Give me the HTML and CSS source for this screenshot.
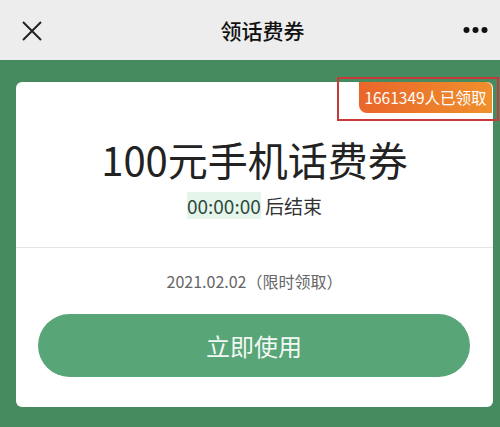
FILE: index.html
```html
<!DOCTYPE html>
<html lang="zh-CN">
<head>
    <meta charset="UTF-8">
    <meta name="viewport" content="width=device-width, initial-scale=1.0">
    <title>领话费券</title>
    <link rel="stylesheet" href="styles.css">
</head>
<body>
    <div class="navbar">
        <svg class="nav-close" width="20" height="20" viewBox="0 0 20 20">
            <path d="M1 1 L19 19 M19 1 L1 19" stroke="#222" stroke-width="2" fill="none"/>
        </svg>
        <div class="nav-title">领话费券</div>
        <svg class="nav-more" width="26" height="8" viewBox="0 0 26 8">
            <circle cx="3.5" cy="4" r="3" fill="#111"/>
            <circle cx="12.5" cy="4" r="3" fill="#111"/>
            <circle cx="21.5" cy="4" r="3" fill="#111"/>
        </svg>
    </div>

    <div class="page">
        <div class="coupon">
            <div class="badge">1661349人已领取</div>
            <div class="mark"></div>

            <div class="coupon-main">
                <div class="coupon-title">100元手机话费券</div>
                <div class="countdown"><span class="time">00:00:00</span> 后结束</div>
            </div>

            <div class="coupon-date">2021.02.02（限时领取）</div>
            <button class="use-btn">立即使用</button>
        </div>
    </div>
</body>
</html>
```

FILE: styles.css
```css
html, body {
    margin: 0;
    padding: 0;
    background: #468a5f;
}
body {
    font-family: "Noto Sans CJK SC", "Noto Sans", sans-serif;
    width: 500px;
    height: 427px;
    overflow: hidden;
}
.navbar {
    height: 60px;
    background: #ededed;
    display: flex;
    align-items: center;
    justify-content: space-between;
    padding: 0 10px 0 22px;
    box-sizing: border-box;
}
.nav-close { margin-top: 1px; }
.nav-title {
    font-size: 21px;
    font-weight: 500;
    color: #111;
    margin-left: 20px;
}
.nav-more { margin-right: 1px; }

.page {
    padding: 22px 7px 20px 16px;
}
.coupon {
    position: relative;
    background: #fff;
    border-radius: 6px;
    height: 325px;
    box-sizing: border-box;
}
.badge {
    position: absolute;
    top: 0;
    right: 1px;
    width: 133px;
    height: 31px;
    line-height: 31px;
    text-align: center;
    font-size: 15.5px;
    color: #fff;
    background: linear-gradient(90deg, #e9662a, #f0902c);
    border-radius: 0 6px 0 8px;
}
.mark {
    position: absolute;
    top: -5px;
    right: -6px;
    width: 162px;
    height: 44px;
    border: 2px solid #c8393b;
    box-sizing: border-box;
}
.coupon-main {
    height: 166px;
    padding-top: 53px;
    box-sizing: border-box;
    border-bottom: 1px solid #e4e4e4;
    text-align: center;
}
.coupon-title {
    font-size: 40px;
    line-height: 48px;
    color: #222;
}
.countdown {
    margin-top: 9px;
    font-size: 19px;
    line-height: 28px;
    color: #333;
}
.time {
    color: #2e4a3c;
    background: #e6f5ec;
}
.coupon-date {
    margin-top: 21px;
    font-size: 16px;
    line-height: 24px;
    color: #666;
    text-align: center;
}
.use-btn {
    display: block;
    margin: 21px 23px 0 22px;
    width: calc(100% - 45px);
    height: 63px;
    border: none;
    border-radius: 32px;
    background: #58a577;
    color: #f2f8f4;
    font-family: inherit;
    font-size: 24px;
}
```
